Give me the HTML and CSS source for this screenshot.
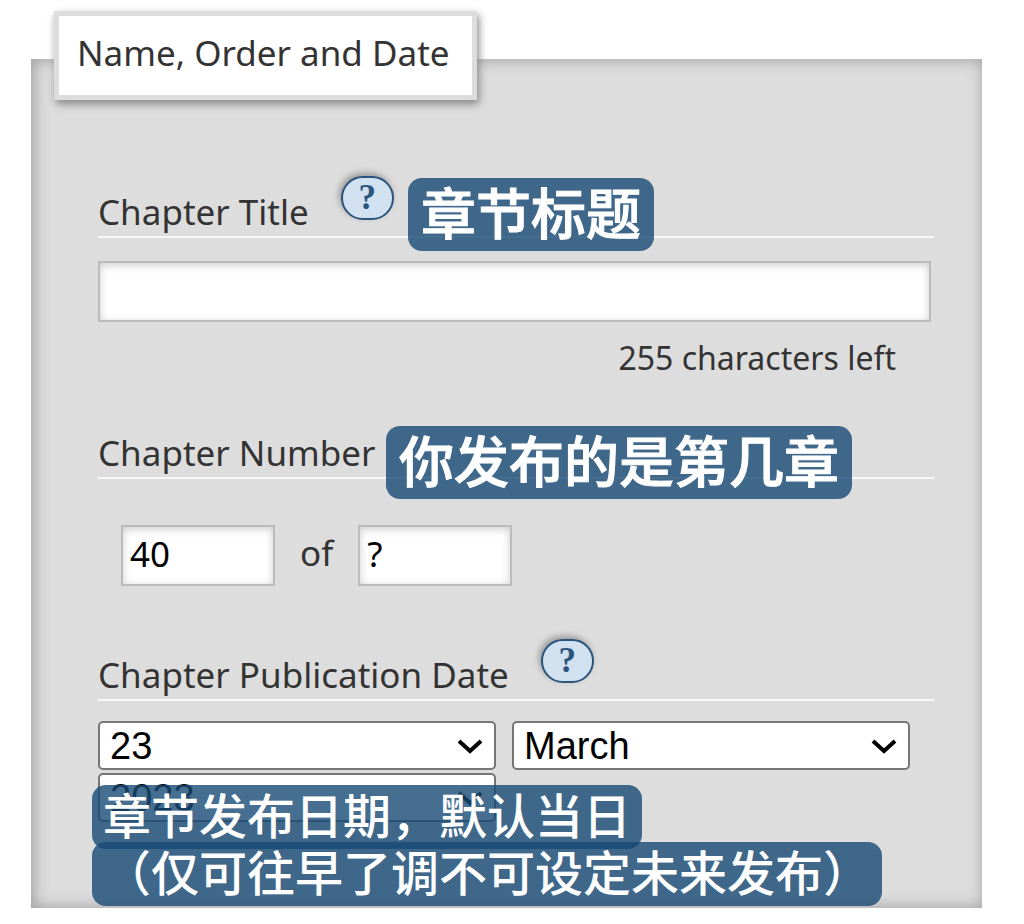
FILE: index.html
```html
<!DOCTYPE html>
<html lang="en">
<head>
<meta charset="utf-8">
<title>Name, Order and Date</title>
<link rel="stylesheet" href="styles.css">
</head>
<body>
<form class="panel" aria-labelledby="panel-title">
  <h2 class="panel-title" id="panel-title">Name, Order and Date</h2>

  <div class="heading">
    <label for="title">Chapter Title</label>
    <button class="help" type="button" aria-label="Chapter title help">?</button>
    <span class="note note-title" lang="zh-CN">章节标题</span>
  </div>
  <input class="field field-title" id="title" type="text" maxlength="255">
  <p class="counter">255 characters left</p>

  <div class="heading">
    <label for="number">Chapter Number</label>
    <span class="note note-number" lang="zh-CN">你发布的是第几章</span>
  </div>
  <div class="numbers">
    <input class="field field-number" id="number" type="text" value="40">
    <label class="of" for="total">of</label>
    <input class="field field-number" id="total" type="text" value="?">
  </div>

  <div class="heading">
    <span>Chapter Publication Date</span>
    <button class="help" type="button" aria-label="Publication date help">?</button>
  </div>
  <div class="dates">
    <div class="pick">
      <select aria-label="Day"><option>23</option></select>
      <svg class="chevron" viewBox="0 0 26 16" aria-hidden="true"><path d="M2 3 L13 13 L24 3"/></svg>
    </div>
    <div class="pick">
      <select aria-label="Month"><option>March</option></select>
      <svg class="chevron" viewBox="0 0 26 16" aria-hidden="true"><path d="M2 3 L13 13 L24 3"/></svg>
    </div>
    <div class="pick">
      <select aria-label="Year"><option>2023</option></select>
      <svg class="chevron" viewBox="0 0 26 16" aria-hidden="true"><path d="M2 3 L13 13 L24 3"/></svg>
    </div>
    <p class="date-notes" lang="zh-CN">
      <span class="note-line">章节发布日期，默认当日</span>
      <span class="note-line">（仅可往早了调不可设定未来发布）</span>
    </p>
  </div>
</form>
</body>
</html>
```
FILE: styles.css
```css
* {
  box-sizing: border-box;
}

body {
  margin: 0;
  padding: 59px 42px 16px 31px;
  background: #fff;
  color: #333;
  font: 35px/48px "Noto Sans", sans-serif;
}

.panel {
  display: flow-root;
  padding: 0 48px 86px 67px;
  background: #ddd;
  box-shadow: inset 2px 0 16px #999;
}

.panel-title {
  width: fit-content;
  margin: -48px 0 76px -44px;
  padding: 13px 22px 18px 18px;
  border: 5px solid #ddd;
  background: #fff;
  box-shadow: 2px 4px 8px #888;
  font-size: 35px;
  font-weight: 400;
}

.heading {
  position: relative;
  display: flex;
  align-items: flex-end;
  gap: 32px;
  height: 62px;
  border-bottom: 2px solid #f8f8f8;
}

.help {
  align-self: flex-start;
  width: 53px;
  height: 44px;
  padding: 0;
  border: 2px solid #2a547c;
  border-radius: 22px;
  background: #d1e1ef;
  box-shadow: -2px -3px 6px #999;
  color: #2a547c;
  font: bold 35px/40px "Liberation Serif", serif;
}

.note {
  position: absolute;
  top: 2px;
  padding: 0 13px 8px;
  border-radius: 14px;
  background: rgba(23, 74, 118, 0.8);
  color: #fff;
  font: 500 55px/65px "Noto Sans CJK SC", sans-serif;
  -webkit-text-stroke: 1px #fff;
  white-space: nowrap;
}

.note-title {
  left: 310px;
}

.note-number {
  top: 9px;
  left: 288px;
}

.field {
  height: 61px;
  padding: 0 7px 4px;
  border: 2px solid #bbb;
  background: #fff;
  box-shadow: inset 0 2px 8px #ccc;
  color: #000;
  font: 35px/48px "Noto Sans", sans-serif;
}

.field-title {
  display: block;
  width: calc(100% - 3px);
  margin-top: 23px;
}

.counter {
  margin: 12px 38px 35px 0;
  font-size: 32px;
  text-align: right;
}

.numbers {
  display: flex;
  align-items: center;
  gap: 25px;
  margin: 46px 0 53px;
  padding-left: 23px;
}

.field-number {
  width: 154px;
}

.of {
  padding-bottom: 5px;
}

.dates {
  position: relative;
  display: grid;
  grid-template-columns: 1fr 1fr;
  gap: 3px 16px;
  margin-top: 20px;
  padding-right: 24px;
}

.pick {
  display: grid;
  align-items: center;
}

.pick > * {
  grid-area: 1 / 1;
}

.pick select {
  appearance: none;
  width: 100%;
  height: 49px;
  padding: 0 10px;
  border: 2px solid #767676;
  border-radius: 5px;
  background: #fff;
  color: #000;
  font: 38px/44px "Liberation Sans", sans-serif;
}

.chevron {
  justify-self: end;
  width: 26px;
  height: 16px;
  margin-right: 13px;
  fill: none;
  stroke: #000;
  stroke-width: 4;
  pointer-events: none;
}

.date-notes {
  position: absolute;
  top: 64px;
  left: -6px;
  margin: 0;
  color: #fff;
  font: 500 48px/56px "Noto Sans CJK SC", sans-serif;
  white-space: nowrap;
}

.note-line {
  display: block;
  width: fit-content;
  padding: 0 11px 8px;
  border-radius: 14px;
  background: rgba(23, 74, 118, 0.8);
}

.note-line + .note-line {
  margin-top: -7px;
}
```
